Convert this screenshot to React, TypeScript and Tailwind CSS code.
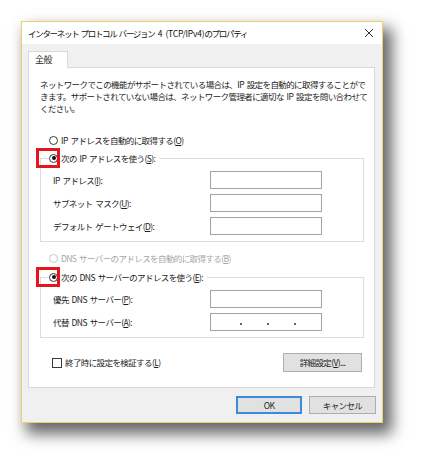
import React from "react";

const font = "font-['Noto_Sans_CJK_JP','Noto_Sans',sans-serif]";

function Radio({ checked = false, disabled = false }: { checked?: boolean; disabled?: boolean }) {
  return (
    <span
      className={`flex h-[9px] w-[9px] shrink-0 items-center justify-center rounded-full border bg-white ${
        disabled ? "border-[#c8c8c8]" : "border-[#3a3a3a]"
      }`}
    >
      {checked && <span className="h-[4px] w-[4px] rounded-full bg-[#111]" />}
    </span>
  );
}

function Key({ k }: { k: string }) {
  return <span className="underline underline-offset-[1px]">{k}</span>;
}

function Field({ label, dots = false }: { label: React.ReactNode; dots?: boolean }) {
  return (
    <div className="flex h-[18px] items-center">
      <span className="w-[157px] whitespace-nowrap">{label}</span>
      <div className="flex h-[18px] w-[112px] items-center border border-[#a3a3a3] bg-white pl-[29px]">
        {dots && (
          <div className="flex gap-[25px] pt-[3px]">
            <span className="h-[2px] w-[2px] bg-[#666]" />
            <span className="h-[2px] w-[2px] bg-[#666]" />
            <span className="h-[2px] w-[2px] bg-[#666]" />
          </div>
        )}
      </div>
    </div>
  );
}

function Group({ legend, children }: { legend: React.ReactNode; children: React.ReactNode }) {
  return (
    <fieldset className="ml-[11px] mr-[10px] border border-[#dcdcdc] pb-[6px] pl-[12px]">
      <legend className="relative -ml-[4px] h-[14px] pr-[4px]">
        <span className="flex h-[14px] items-center gap-[3px] whitespace-nowrap">
          <Radio checked />
          {legend}
        </span>
        {/* red highlight */}
        <span className="absolute left-[-13px] top-[-3px] h-[20px] w-[24px] border-[3px] border-[#e8141c]" />
      </legend>
      <div className="flex flex-col gap-[5px] pt-[6px]">{children}</div>
    </fieldset>
  );
}

export default function App() {
  return (
    <div
      className={`h-[467px] w-[426px] bg-white pl-[21px] pt-[21px] text-[8.5px] tracking-[-0.6px] text-[#1b1b1b] [word-spacing:1.5px] ${font}`}
    >
      <div className="flex h-[402px] w-[362px] flex-col border border-[#f1cf67] bg-[#f0f0f0] shadow-[7px_9px_14px_2px_rgba(0,0,0,0.6)]">
        {/* title bar */}
        <div className="flex h-[22px] shrink-0 items-center justify-between bg-white pl-[6px] pr-[8px]">
          <span className="whitespace-nowrap text-[8.5px] text-[#111]">
            <span className="tracking-[-1.3px]">インターネット プロトコル バージョン</span>
            <span className="tracking-[-0.2px]"> 4 (TCP/IPv4)</span>
            <span className="tracking-[-1.3px]">のプロパティ</span>
          </span>
          <svg width="10" height="10" viewBox="0 0 10 10" className="mb-[1px]">
            <path d="M1 1 L9 9 M9 1 L1 9" stroke="#333" strokeWidth="1" />
          </svg>
        </div>

        {/* tabs */}
        <div className="flex pl-[6px] pt-[7px]">
          <div className="relative z-10 -mb-px flex h-[17px] w-[40px] items-center border border-b-0 border-[#d9d9d9] bg-white pl-[6px] text-[9px]">
            全般
          </div>
        </div>

        {/* panel */}
        <div className="ml-[6px] flex h-[321px] w-[347px] flex-col border border-[#d9d9d9] bg-white pt-[10px]">
          <p className="whitespace-nowrap pl-[11px] leading-[12px]">
            ネットワークでこの機能がサポートされている場合は、IP 設定を自動的に取得することがで
            <br />
            きます。サポートされていない場合は、ネットワーク管理者に適切な IP 設定を問い合わせて
            <br />
            ください。
          </p>

          <div className="mt-[19px] flex h-[14px] items-center gap-[3px] pl-[20px]">
            <Radio />
            <span>
              IP アドレスを自動的に取得する(<Key k="O" />)
            </span>
          </div>

          <div className="mt-[4px]">
            <Group
              legend={
                <span>
                  次の IP アドレスを使う(<Key k="S" />):
                </span>
              }
            >
              <Field
                label={
                  <>
                    IP アドレス(<Key k="I" />):
                  </>
                }
              />
              <Field
                label={
                  <>
                    サブネット マスク(<Key k="U" />):
                  </>
                }
              />
              <Field
                label={
                  <>
                    デフォルト ゲートウェイ(<Key k="D" />):
                  </>
                }
              />
            </Group>
          </div>

          <div className="mt-[9px] flex h-[14px] items-center gap-[3px] pl-[20px] text-[#a6a6a6]">
            <Radio disabled />
            <span>
              DNS サーバーのアドレスを自動的に取得する(<Key k="B" />)
            </span>
          </div>

          <div className="mt-[5px]">
            <Group
              legend={
                <span>
                  次の DNS サーバーのアドレスを使う(<Key k="E" />):
                </span>
              }
            >
              <Field
                label={
                  <>
                    優先 DNS サーバー(<Key k="P" />):
                  </>
                }
              />
              <Field
                dots
                label={
                  <>
                    代替 DNS サーバー(<Key k="A" />):
                  </>
                }
              />
            </Group>
          </div>

          <div className="mt-[15px] flex items-center justify-between pl-[23px] pr-[12px]">
            <div className="flex items-center gap-[3px]">
              <span className="h-[10px] w-[10px] border border-[#3a3a3a] bg-white" />
              <span>
                終了時に設定を検証する(<Key k="L" />)
              </span>
            </div>
            <button className="flex h-[19px] w-[79px] items-center justify-center border border-[#adadad] bg-[#e1e1e1]">
              詳細設定(<Key k="V" />)...
            </button>
          </div>
        </div>

        {/* footer */}
        <div className="flex justify-end gap-[7px] pr-[6px] pt-[8px]">
          <button className="flex h-[18px] w-[66px] items-center justify-center border-2 border-[#3d8ad9] bg-[#e1e1e1]">
            OK
          </button>
          <button className="flex h-[18px] w-[67px] items-center justify-center border border-[#adadad] bg-[#e1e1e1]">
            キャンセル
          </button>
        </div>
      </div>
    </div>
  );
}
